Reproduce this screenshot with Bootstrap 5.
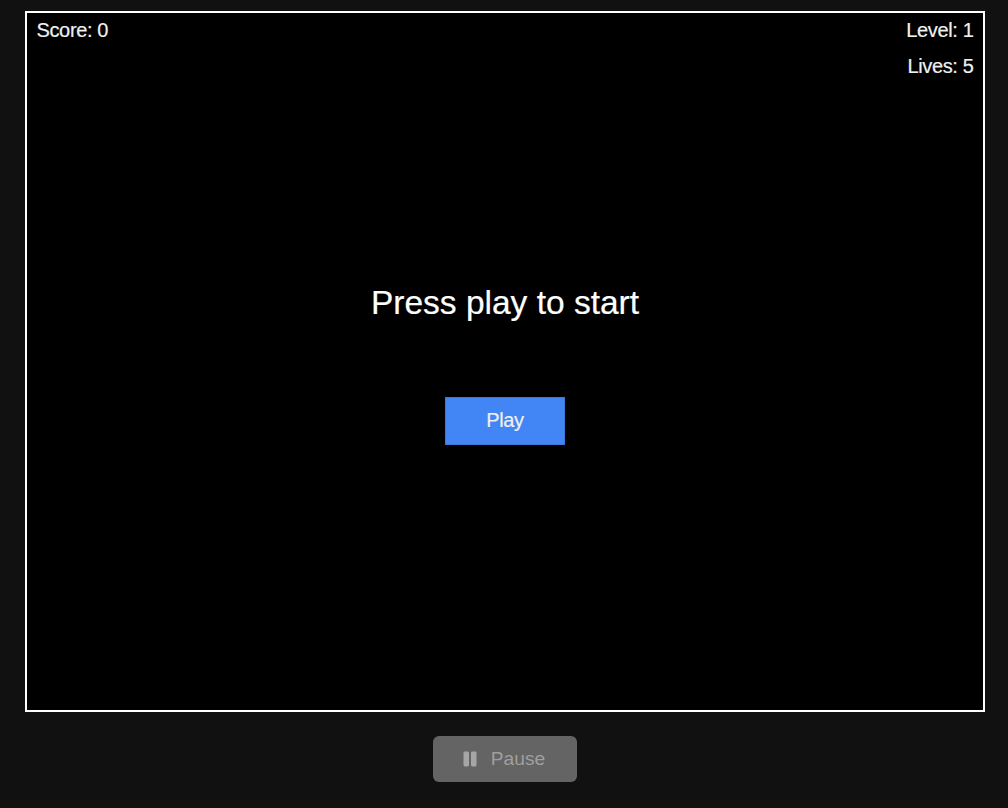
<!DOCTYPE html>
<html lang="en">
<head>
<meta charset="utf-8">
<title>Game</title>
<link rel="stylesheet" href="https://cdn.jsdelivr.net/npm/bootstrap@5.3.0/dist/css/bootstrap.min.css">
<style>
body{background:#111;color:#fff;font-family:"Liberation Sans",sans-serif;font-size:19.2px;line-height:36px;height:808px;overflow:hidden;padding-top:11px}
.board{width:960px;height:701px;margin-left:25px;border:2px solid #fff;background:#000}
.hud{height:270px;padding:0 9.5px;font-size:20px;letter-spacing:-.36px;line-height:34px;color:#f0f0f0;-webkit-text-stroke:.2px #f0f0f0}
.hud .stat + .stat{margin-top:2px}
.headline{font-size:33.5px;line-height:40px;font-weight:400;margin:0 0 74px;-webkit-text-stroke:.2px #fff}
.btn-play,.btn-play:hover{width:120px;height:48px;background:#4285f4;color:#f0f0f0;font-size:20px;letter-spacing:-.36px;line-height:44px;border:1px solid #3c78dc;border-radius:0;padding:0 0 2px;-webkit-text-stroke:.2px #f0f0f0}
.btn-pause,.btn-pause:disabled{width:144px;height:46px;margin-top:24px;margin-left:1px;background:#646464;color:#9f9f9f;border:0;border-radius:6px;font-size:19.2px;padding:0 1px 0 0;opacity:1;gap:14px}
</style>
</head>
<body>
<main class="board d-flex flex-column align-items-center">
  <div class="hud w-100 d-flex justify-content-between">
    <div class="stat">Score: 0</div>
    <div class="text-end"><div class="stat">Level: 1</div><div class="stat">Lives: 5</div></div>
  </div>
  <h1 class="headline text-center">Press play to start</h1>
  <button class="btn btn-play" type="button">Play</button>
</main>
<div class="d-flex justify-content-center">
  <button class="btn btn-pause d-flex align-items-center justify-content-center" type="button" disabled>
    <svg width="14" height="16" viewBox="0 0 14 16" fill="#a6a6a6" aria-hidden="true"><rect x=".5" y=".5" width="5.5" height="15" rx="1.4"/><rect x="8" y=".5" width="5.5" height="15" rx="1.4"/></svg>
    <span>Pause</span>
  </button>
</div>
<script src="https://cdn.jsdelivr.net/npm/bootstrap@5.3.0/dist/js/bootstrap.bundle.min.js"></script>
</body>
</html>
